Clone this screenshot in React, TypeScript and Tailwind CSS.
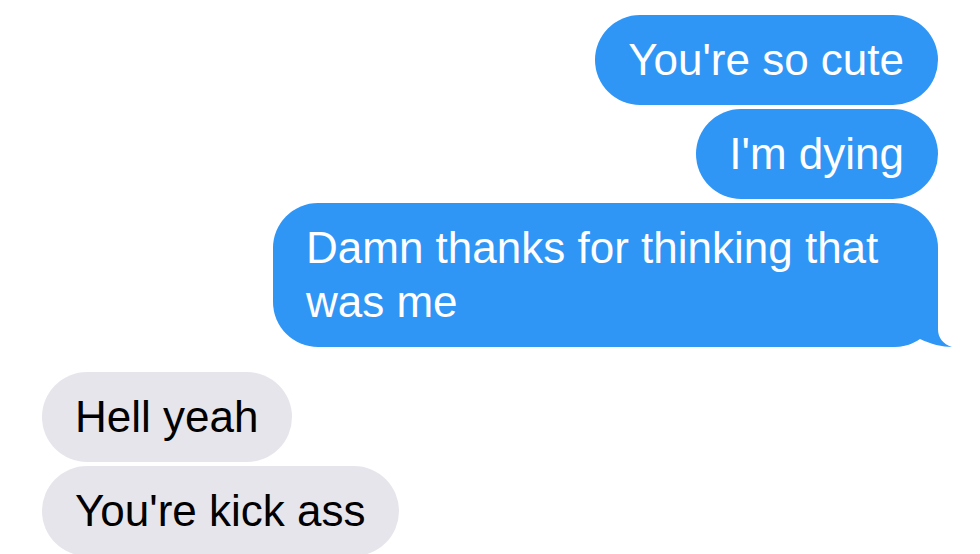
type Message = {
  text: string;
  fromMe: boolean;
  tail?: boolean;
};

const messages: Message[] = [
  { text: "You're so cute", fromMe: true },
  { text: "I'm dying", fromMe: true },
  { text: "Damn thanks for thinking that was me", fromMe: true, tail: true },
  { text: "Hell yeah", fromMe: false },
  { text: "You're kick ass", fromMe: false },
];

function Tail() {
  // little hook at the bottom right of the last sent bubble
  return (
    <svg
      className="absolute right-[-15px] bottom-0"
      width="60"
      height="50"
      viewBox="0 0 60 50"
    >
      <path
        d="M0 50 L0 0 L45 0 L45 32 C45 41 50 47 59 50 C50 50 37 47 27 42 C20 47 11 50 0 50 Z"
        fill="#2F96F6"
      />
    </svg>
  );
}

export default function App() {
  return (
    <main
      className="w-[980px] h-[554px] overflow-hidden bg-white px-[42px] pt-[15px]"
      style={{ fontFamily: '"Liberation Sans", Arial, sans-serif' }}
    >
      <div className="flex flex-col">
        {messages.map((m, i) => {
          const prev = messages[i - 1];
          const gap = prev && prev.fromMe !== m.fromMe ? "mt-[25px]" : i > 0 ? "mt-[4px]" : "";
          return (
            <div key={i} className={`flex ${m.fromMe ? "justify-end" : "justify-start"} ${gap}`}>
              <div
                className={`relative rounded-[45px] pl-[33px] pr-[34px] py-[18px] text-[44px] leading-[54px] ${
                  m.fromMe ? "bg-[#2F96F6] text-white" : "bg-[#E6E5EB] text-black"
                } ${m.tail ? "w-[665px]" : ""}`}
              >
                <span className="relative z-10">{m.text}</span>
                {m.tail && <Tail />}
              </div>
            </div>
          );
        })}
      </div>
    </main>
  );
}
